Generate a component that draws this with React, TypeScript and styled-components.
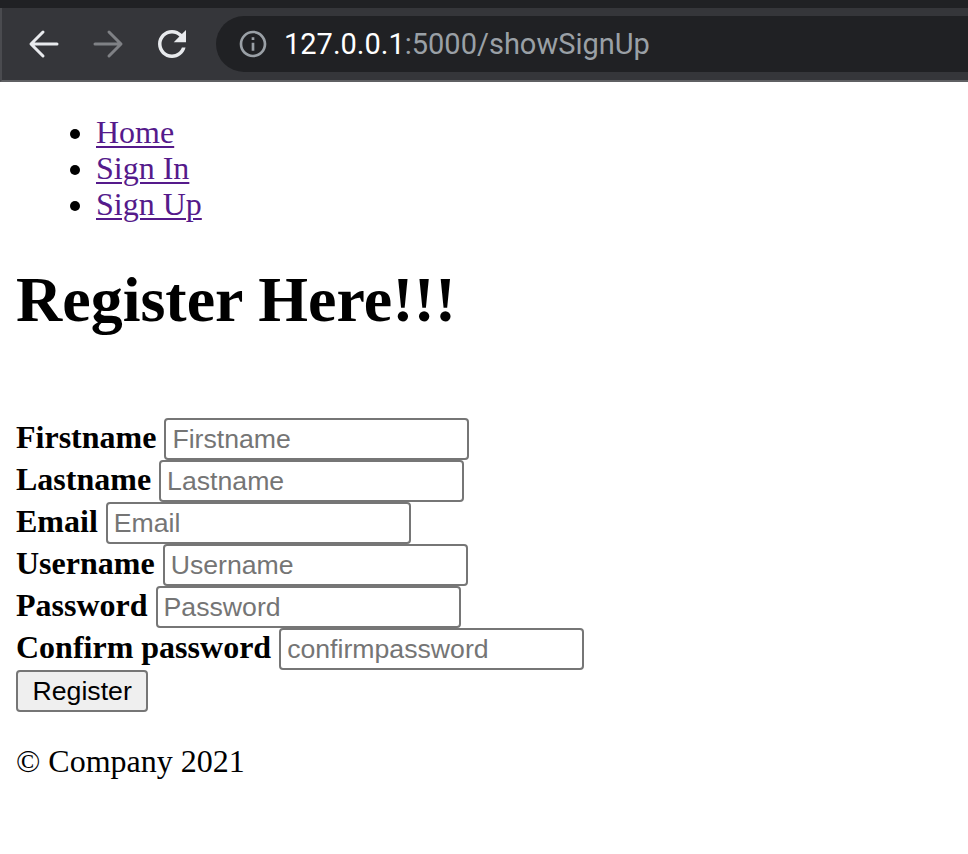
import React from "react";
import styled, { createGlobalStyle } from "styled-components";

const Global = createGlobalStyle`
  html, body { margin: 0; padding: 0; background: #ffffff; }
  body { font-family: "Liberation Serif", "Times New Roman", serif; font-size: 32px; color: #000; }
`;

const Chrome = styled.header`
  background: #202124;
  padding-top: 8px;
`;

const Toolbar = styled.div`
  height: 72px;
  background: #35363a;
  border-bottom: 2px solid #5f6063;
  border-left: 2px solid #4a4b4f;
  display: flex;
  align-items: center;
  padding-left: 13px;
  gap: 6px;
`;

const NavButton = styled.span<{ $dim?: boolean }>`
  width: 58px;
  height: 56px;
  display: flex;
  align-items: center;
  justify-content: center;
  color: ${(p) => (p.$dim ? "#7f8185" : "#e8eaed")};
`;

const Omnibox = styled.div`
  flex: 1;
  height: 56px;
  margin-left: 9px;
  background: #202124;
  border-radius: 28px 0 0 28px;
  display: flex;
  align-items: center;
  padding-left: 21px;
  gap: 15px;
  font-family: Roboto, "Noto Sans", sans-serif;
  font-size: 29px;
  letter-spacing: 0px;
`;

const Host = styled.span`
  color: #ffffff;
`;

const Path = styled.span`
  color: #9aa0a6;
`;

const Url = styled.span`
  white-space: nowrap;
`;

const Page = styled.main`
  padding: 0 16px;
  overflow: hidden;
`;

const NavList = styled.ul`
  margin: 32px 0;
  padding-left: 80px;
  list-style: disc;
  line-height: 36px;
`;

const NavLink = styled.a`
  color: #551a8b;
  text-decoration: underline;
  text-decoration-thickness: 2px;
  text-underline-offset: 3px;
`;

const Title = styled.h1`
  font-size: 64px;
  font-weight: bold;
  line-height: 72px;
  margin: 42px 0 42px;
`;

const Form = styled.form`
  padding-top: 40px;
`;

const Row = styled.div`
  height: 42px;
  display: flex;
  align-items: baseline;
  gap: 8px;
`;

const Label = styled.label`
  font-weight: bold;
  line-height: 36px;
`;

const Field = styled.input`
  box-sizing: border-box;
  width: 305px;
  height: 42px;
  border: 2px solid #767676;
  border-radius: 4px;
  padding: 2px 6px;
  font-family: "Liberation Sans", Arial, sans-serif;
  font-size: 26.67px;
  color: #000;
  background: #fff;
  &::placeholder { color: #757575; }
`;

const Button = styled.button`
  box-sizing: border-box;
  height: 42px;
  padding: 2px 14.5px;
  border: 2px solid #767676;
  border-radius: 4px;
  background: #efefef;
  font-family: "Liberation Sans", Arial, sans-serif;
  font-size: 26.67px;
  color: #000;
`;

const Footer = styled.p`
  margin: 31px 0;
`;

const BackIcon = () => (
  <svg width="36" height="36" viewBox="0 0 36 36" fill="none" stroke="currentColor" strokeWidth="3" strokeLinecap="round" strokeLinejoin="round">
    <path d="M31 18H6M17 6L5 18l12 12" />
  </svg>
);

const ForwardIcon = () => (
  <svg width="36" height="36" viewBox="0 0 36 36" fill="none" stroke="currentColor" strokeWidth="3" strokeLinecap="round" strokeLinejoin="round">
    <path d="M5 18h25M19 6l12 12-12 12" />
  </svg>
);

const ReloadIcon = () => (
  <svg width="42" height="42" viewBox="0 0 24 24" fill="currentColor">
    <path d="M17.65 6.35C16.2 4.9 14.21 4 12 4c-4.42 0-7.99 3.58-7.99 8s3.57 8 7.99 8c3.73 0 6.84-2.55 7.73-6h-2.08c-.82 2.33-3.04 4-5.65 4-3.31 0-6-2.69-6-6s2.690-6 6-6c1.66 0 3.14.69 4.22 1.78L13 11h7V4l-2.35 2.35z" />
  </svg>
);

const InfoIcon = () => (
  <svg width="32" height="32" viewBox="0 0 24 24" fill="#9aa0a6">
    <path d="M11 7h2v2h-2zm0 4h2v6h-2zm1-9C6.48 2 2 6.48 2 12s4.48 10 10 10 10-4.48 10-10S17.52 2 12 2zm0 18c-4.41 0-8-3.59-8-8s3.59-8 8-8 8 3.59 8 8-3.59 8-8 8z" />
  </svg>
);

const fields = [
  { label: "Firstname", placeholder: "Firstname" },
  { label: "Lastname", placeholder: "Lastname" },
  { label: "Email", placeholder: "Email" },
  { label: "Username", placeholder: "Username" },
  { label: "Password", placeholder: "Password" },
  { label: "Confirm password", placeholder: "confirmpassword" },
];

export default function App() {
  return (
    <>
      <Global />
      <Chrome>
        <Toolbar>
          <NavButton><BackIcon /></NavButton>
          <NavButton $dim><ForwardIcon /></NavButton>
          <NavButton><ReloadIcon /></NavButton>
          <Omnibox>
            <InfoIcon />
            <Url>
              <Host>127.0.0.1</Host>
              <Path>:5000/showSignUp</Path>
            </Url>
          </Omnibox>
        </Toolbar>
      </Chrome>
      <Page>
        <NavList>
          <li><NavLink href="#">Home</NavLink></li>
          <li><NavLink href="#">Sign In</NavLink></li>
          <li><NavLink href="#">Sign Up</NavLink></li>
        </NavList>
        <Title>Register Here!!!</Title>
        <Form onSubmit={(e) => e.preventDefault()}>
          {fields.map((f) => (
            <Row key={f.label}>
              <Label>{f.label}</Label>
              <Field type="text" placeholder={f.placeholder} />
            </Row>
          ))}
          <Row>
            <Button type="submit">Register</Button>
          </Row>
        </Form>
        <Footer>© Company 2021</Footer>
      </Page>
    </>
  );
}
